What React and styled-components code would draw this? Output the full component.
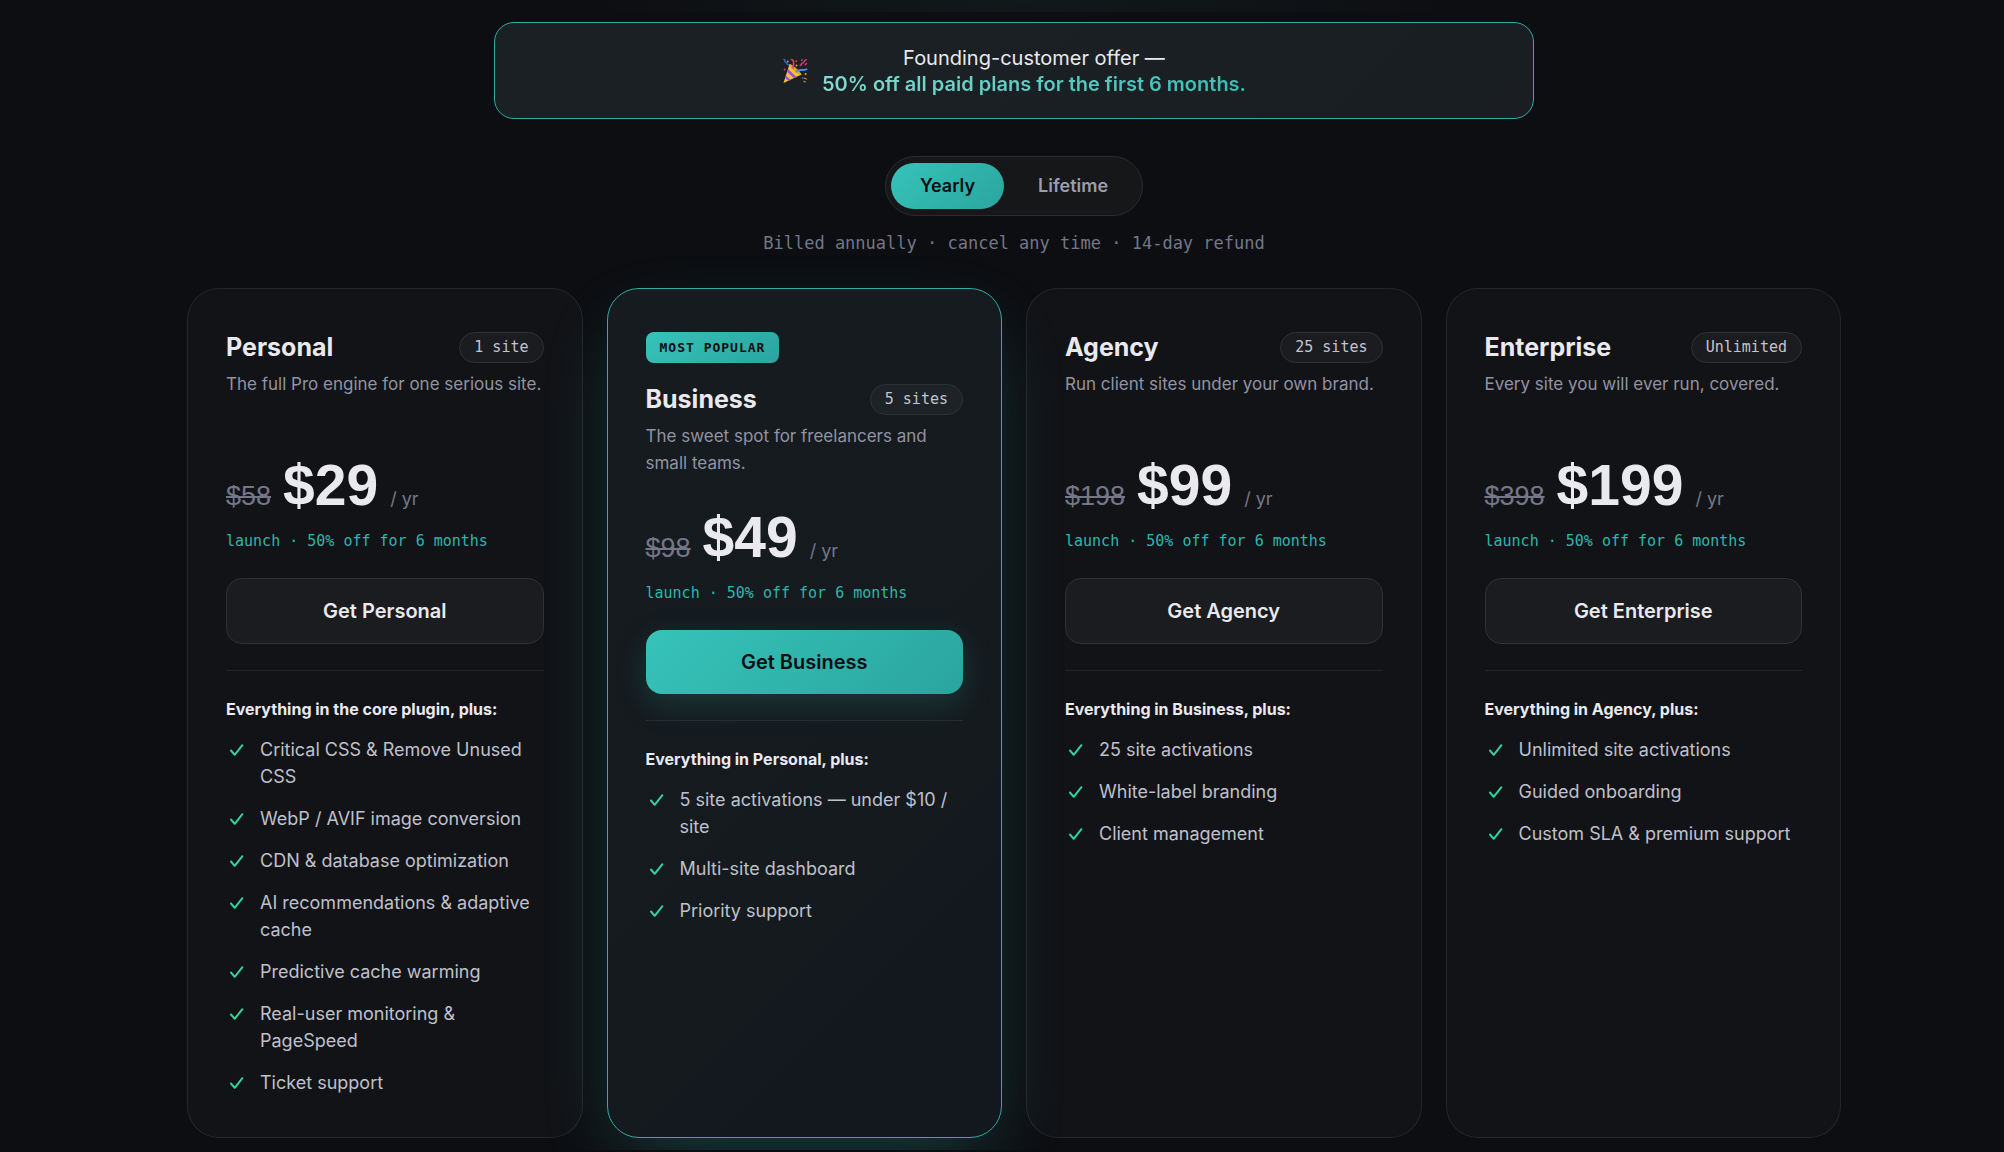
import { useState } from "react";
import styled, { createGlobalStyle, css } from "styled-components";

const plans = [
  {
    name: "Personal",
    sites: "1 site",
    description: "The full Pro engine for one serious site.",
    oldPrice: "$58",
    price: "$29",
    intro: "Everything in the core plugin, plus:",
    features: [
      "Critical CSS & Remove Unused CSS",
      "WebP / AVIF image conversion",
      "CDN & database optimization",
      "AI recommendations & adaptive cache",
      "Predictive cache warming",
      "Real-user monitoring & PageSpeed",
      "Ticket support",
    ],
  },
  {
    name: "Business",
    sites: "5 sites",
    description: "The sweet spot for freelancers and small teams.",
    oldPrice: "$98",
    price: "$49",
    intro: "Everything in Personal, plus:",
    features: [
      "5 site activations — under $10 / site",
      "Multi-site dashboard",
      "Priority support",
    ],
    popular: true,
  },
  {
    name: "Agency",
    sites: "25 sites",
    description: "Run client sites under your own brand.",
    oldPrice: "$198",
    price: "$99",
    intro: "Everything in Business, plus:",
    features: ["25 site activations", "White-label branding", "Client management"],
  },
  {
    name: "Enterprise",
    sites: "Unlimited",
    description: "Every site you will ever run, covered.",
    oldPrice: "$398",
    price: "$199",
    intro: "Everything in Agency, plus:",
    features: [
      "Unlimited site activations",
      "Guided onboarding",
      "Custom SLA & premium support",
    ],
  },
];

function PartyIcon() {
  return (
    <svg width="26" height="26" viewBox="0 0 26 26" fill="none" aria-hidden="true">
      <path d="M1.500 25 7.600 6c3 1 9.600 6.400 11.900 10.500Z" fill="#f7c62f" />
      <path d="M7.600 6c3 1 9.600 6.400 11.900 10.500-3.500.8-12.400-6.600-11.900-10.500Z" fill="#e0a526" />
      <path d="m6 11 8.600 8-2.600 1.300L5.200 14Z" fill="#9c4fe0" />
      <path d="m3.900 17.500 5 4.400-2.300 1.100-3.500-3Z" fill="#9c4fe0" />
      <path d="M2 1.500c2 .3-.2 2.500 1.800 2.800s.6 2.200 2.400 2.400" stroke="#3567d6" strokeWidth="1.500" strokeLinecap="round" />
      <path d="M9.500 1.500c3 .6 2.300 4.500 1.500 8.200" stroke="#e23b64" strokeWidth="1.700" strokeLinecap="round" />
      <path d="M14.500 13.500c3-3 6-.3 10-2.300" stroke="#4a8df0" strokeWidth="1.800" strokeLinecap="round" />
      <path d="M18 7.500c2.500.2.500-2.600 2.600-2.500s1.200-3 3.600-3.200M24.500 5.500l-1.300 1.200M19.500 2l.7.300" stroke="#d83a72" strokeWidth="1.500" strokeLinecap="round" />
      <circle cx="14.300" cy="3.200" r="0.900" fill="#e8493a" />
      <circle cx="14.500" cy="7.500" r="0.900" fill="#f5b32d" />
      <circle cx="5.800" cy="3.400" r="0.800" fill="#f5b32d" />
      <circle cx="2.600" cy="11.500" r="0.900" fill="#e23b64" />
      <circle cx="23.600" cy="16" r="1" fill="#f0a92d" />
      <circle cx="20.500" cy="20" r="0.900" fill="#3567d6" />
      <path d="m22.300 20.200 2.200.8M21.800 23.400l1.400.4" stroke="#e8693a" strokeWidth="1.300" strokeLinecap="round" />
    </svg>
  );
}

function CheckIcon() {
  return (
    <Check width="22" height="22" viewBox="0 0 22 22" fill="none" aria-hidden="true">
      <path d="m5 11.500 3.700 4.300L16.400 6.200" stroke="#34d399" strokeWidth="2" strokeLinecap="round" strokeLinejoin="round" />
    </Check>
  );
}

function PlanCard({ plan }) {
  return (
    <Card $popular={plan.popular}>
      {plan.popular && <Badge>MOST POPULAR</Badge>}
      <CardHead>
        <PlanName>{plan.name}</PlanName>
        <Sites>{plan.sites}</Sites>
      </CardHead>
      <Description>{plan.description}</Description>
      <PriceRow>
        <OldPrice>{plan.oldPrice}</OldPrice>
        <Price>{plan.price}</Price>
        <Period>/ yr</Period>
      </PriceRow>
      <Launch>launch · 50% off for 6 months</Launch>
      <BuyButton type="button" $primary={plan.popular}>
        Get {plan.name}
      </BuyButton>
      <Divider />
      <Intro>{plan.intro}</Intro>
      <Features>
        {plan.features.map((feature) => (
          <Feature key={feature}>
            <CheckIcon />
            <span>{feature}</span>
          </Feature>
        ))}
      </Features>
    </Card>
  );
}

export default function App() {
  const [billing, setBilling] = useState("Yearly");
  return (
    <>
      <GlobalStyle />
      <Glow />
      <Page>
        <Banner>
          <PartyIcon />
          <BannerText>
            Founding-customer offer —
            <strong>50% off all paid plans for the first 6 months.</strong>
          </BannerText>
        </Banner>
        <Toggle>
          {["Yearly", "Lifetime"].map((option) => (
            <ToggleButton
              key={option}
              type="button"
              aria-pressed={billing === option}
              $active={billing === option}
              onClick={() => setBilling(option)}
            >
              {option}
            </ToggleButton>
          ))}
        </Toggle>
        <BillingNote>Billed annually · cancel any time · 14-day refund</BillingNote>
        <Plans>
          {plans.map((plan) => (
            <PlanCard key={plan.name} plan={plan} />
          ))}
        </Plans>
      </Page>
    </>
  );
}

const mono = `"DejaVu Sans Mono", "Liberation Mono", monospace`;
const figures = `"Liberation Sans", Arial, sans-serif`;
const teal = "linear-gradient(135deg, #36c3ba, #2aa59e)";

const GlobalStyle = createGlobalStyle`
  * {
    box-sizing: border-box;
  }
  body {
    margin: 0;
    background: #0d0e12;
    color: #e9e9ee;
    font-family: "Inter", "Liberation Sans", sans-serif;
  }
  button {
    font-family: inherit;
    cursor: pointer;
  }
`;

const Glow = styled.div`
  height: 12px;
  background: radial-gradient(ellipse 440px 60px at 51% 0, #12191b, #0d0e12);
`;

const Page = styled.main`
  display: flex;
  flex-direction: column;
  align-items: center;
  padding: 10px 24px 12px 48px;
`;

const Banner = styled.div`
  width: 100%;
  max-width: 1040px;
  display: flex;
  align-items: center;
  justify-content: center;
  gap: 14px;
  padding: 22px 24px 21px;
  border: 1px solid #2eaea6;
  border-radius: 20px;
  background: linear-gradient(135deg, #1a2124, #1a1e22);
`;

const BannerText = styled.p`
  margin: 0;
  font-size: 20px;
  line-height: 26px;
  text-align: center;

  strong {
    display: block;
    font-weight: 600;
    color: transparent;
    background: linear-gradient(135deg, #86dbd0, #34bdb4);
    background-clip: text;
  }
`;

const Toggle = styled.div`
  display: flex;
  gap: 5px;
  margin-top: 37px;
  padding: 6px 5px;
  border: 1px solid #2a2b2e;
  border-radius: 999px;
  background: #161719;
`;

const ToggleButton = styled.button`
  padding: 11px 29px;
  border: 0;
  border-radius: 999px;
  background: ${({ $active }) => ($active ? teal : "transparent")};
  color: ${({ $active }) => ($active ? "#0d0e12" : "#9b9dae")};
  font-size: 18px;
  font-weight: 600;
  line-height: 24px;
`;

const BillingNote = styled.p`
  margin: 14px 0 32px;
  color: #747787;
  font-family: ${mono};
  font-size: 17px;
  line-height: 26px;
`;

const Plans = styled.section`
  width: 100%;
  max-width: 1654px;
  display: grid;
  grid-template-columns: repeat(4, minmax(0, 1fr));
  gap: 24px;
`;

const Card = styled.article`
  display: flex;
  flex-direction: column;
  padding: 43px 38px 41px;
  border: 1px solid rgba(255, 255, 255, 0.08);
  border-radius: 32px;
  background: rgba(255, 255, 255, 0.025);
  ${({ $popular }) =>
    $popular &&
    css`
      border-color: #2eaea6;
      background: linear-gradient(135deg, #151b1f, #151a1e 65%, #13181f 80%);
      box-shadow: 0 30px 80px -20px rgba(52, 189, 180, 0.3);
    `}
`;

const Badge = styled.span`
  align-self: flex-start;
  margin-bottom: 21px;
  padding: 5px 14px;
  border-radius: 8px;
  background: ${teal};
  color: #0d0e12;
  font-family: ${mono};
  font-size: 13px;
  font-weight: 700;
  letter-spacing: 1px;
  line-height: 21px;
`;

const CardHead = styled.div`
  display: flex;
  align-items: center;
  justify-content: space-between;
`;

const PlanName = styled.h2`
  margin: 0;
  font-size: 25px;
  font-weight: 700;
  line-height: 31px;
`;

const Sites = styled.span`
  padding: 4px 14px;
  border: 1px solid #303135;
  border-radius: 999px;
  background: rgba(255, 255, 255, 0.04);
  color: #c3c4ce;
  font-family: ${mono};
  font-size: 15px;
  line-height: 21px;
`;

const Description = styled.p`
  min-height: 54px;
  margin: 8px 0 33px;
  color: #9193a2;
  font-size: 17px;
  line-height: 27px;
`;

const PriceRow = styled.div`
  display: flex;
  align-items: baseline;
  gap: 12px;
  line-height: 24px;
`;

const OldPrice = styled.s`
  color: #747787;
  font-family: ${figures};
  font-size: 27px;
`;

const Price = styled.span`
  font-family: ${figures};
  font-size: 57px;
  font-weight: 700;
  line-height: 54px;
`;

const Period = styled.span`
  color: #747787;
  font-size: 18px;
`;

const Launch = styled.p`
  margin: 17px 0 25px;
  color: #2eb5ac;
  font-family: ${mono};
  font-size: 15px;
  line-height: 24px;
`;

const BuyButton = styled.button`
  padding: 20px;
  border: 1px solid #303135;
  border-radius: 16px;
  background: #1b1c20;
  color: #e9e9ee;
  font-size: 20px;
  font-weight: 600;
  line-height: 24px;
  ${({ $primary }) =>
    $primary &&
    css`
      border: 0;
      background: ${teal};
      color: #0d0e12;
      box-shadow: 0 10px 32px rgba(45, 180, 170, 0.2);
    `}
`;

const Divider = styled.hr`
  width: 100%;
  height: 1px;
  margin: 26px 0;
  border: 0;
  background: rgba(255, 255, 255, 0.08);
`;

const Intro = styled.h3`
  margin: 0 0 15px;
  font-size: 16px;
  font-weight: 700;
  line-height: 24px;
`;

const Features = styled.ul`
  display: grid;
  gap: 15px;
  margin: 0;
  padding: 0;
  list-style: none;
`;

const Feature = styled.li`
  display: flex;
  gap: 12px;
  color: #bfc0cc;
  font-size: 18px;
  line-height: 27px;
`;

const Check = styled.svg`
  flex: none;
  margin-top: 3px;
`;
